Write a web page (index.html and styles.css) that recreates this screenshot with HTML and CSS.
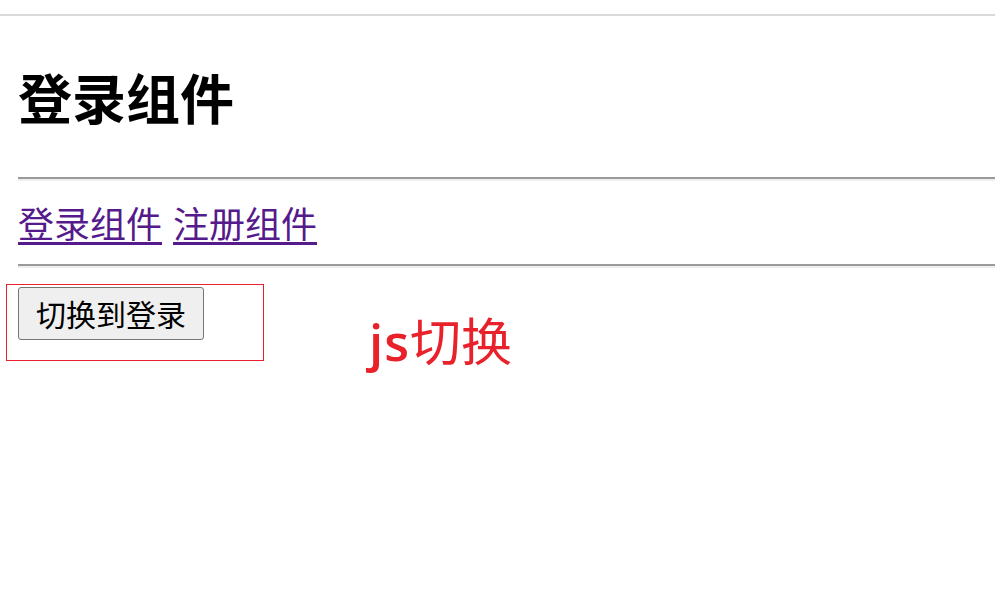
FILE: index.html
```html
<!DOCTYPE html>
<html lang="zh-CN">
<head>
<meta charset="utf-8">
<title>登录组件</title>
<link rel="stylesheet" href="styles.css">
</head>
<body>
<div class="chrome"></div>
<main class="page">
  <h2 class="title">登录组件</h2>
  <hr class="rule">
  <nav class="links">
    <a href="#login" class="link">登录组件</a>
    <a href="#register" class="link">注册组件</a>
  </nav>
  <hr class="rule">
  <div class="actions">
    <button class="btn" type="button">切换到登录</button>
  </div>
</main>
<div class="note-box"></div>
<div class="note-text"><span class="note-latin">js</span>切换</div>
</body>
</html>
```
FILE: styles.css
```css
html, body {
  margin: 0;
  padding: 0;
  background: #fff;
}
body {
  font-family: "Noto Sans CJK SC", "Noto Sans", sans-serif;
  color: #000;
  position: relative;
  width: 995px;
  height: 594px;
  overflow: hidden;
}
.chrome {
  height: 14px;
  border-bottom: 2px solid #d9d9d9;
}
.page {
  padding-left: 18px;
}
.title {
  margin: 45px 0 0;
  font-size: 54px;
  line-height: 71px;
  font-weight: 700;
}
.rule {
  margin: 44px 0 18px;
  border: 0;
  border-top: 2px solid #9a9a9a;
  border-bottom: 2px solid #eeeeee;
  height: 0;
}
.title + .rule {
  margin-top: 45px;
}
.links + .rule {
  margin-top: 18px;
}
.links {
  display: flex;
  gap: 11px;
  font-size: 36px;
  line-height: 47px;
}
.link {
  color: #551a8b;
  text-decoration: underline;
  text-decoration-thickness: 3px;
  text-underline-offset: 4px;
}
.actions {
  padding-top: 1px;
}
.btn {
  font-family: "Noto Sans CJK SC", sans-serif;
  font-size: 30px;
  line-height: 35px;
  padding: 8px 17px;
  width: 186px;
  height: 53px;
  background: #efefef;
  color: #000;
  border: 1px solid #767676;
  border-radius: 3px;
  box-sizing: border-box;
  white-space: nowrap;
}
.note-box {
  position: absolute;
  left: 6px;
  top: 284px;
  width: 256px;
  height: 75px;
  border: 1px solid #e8212b;
}
.note-text {
  position: absolute;
  left: 369px;
  top: 314px;
  font-size: 51px;
  line-height: 51px;
  font-weight: 400;
  color: #e8212b;
  font-family: "Noto Sans CJK SC", "Noto Sans", sans-serif;
}
.note-latin {
  font-family: "Open Sans", sans-serif;
  font-weight: 600;
  letter-spacing: 1px;
}
```
